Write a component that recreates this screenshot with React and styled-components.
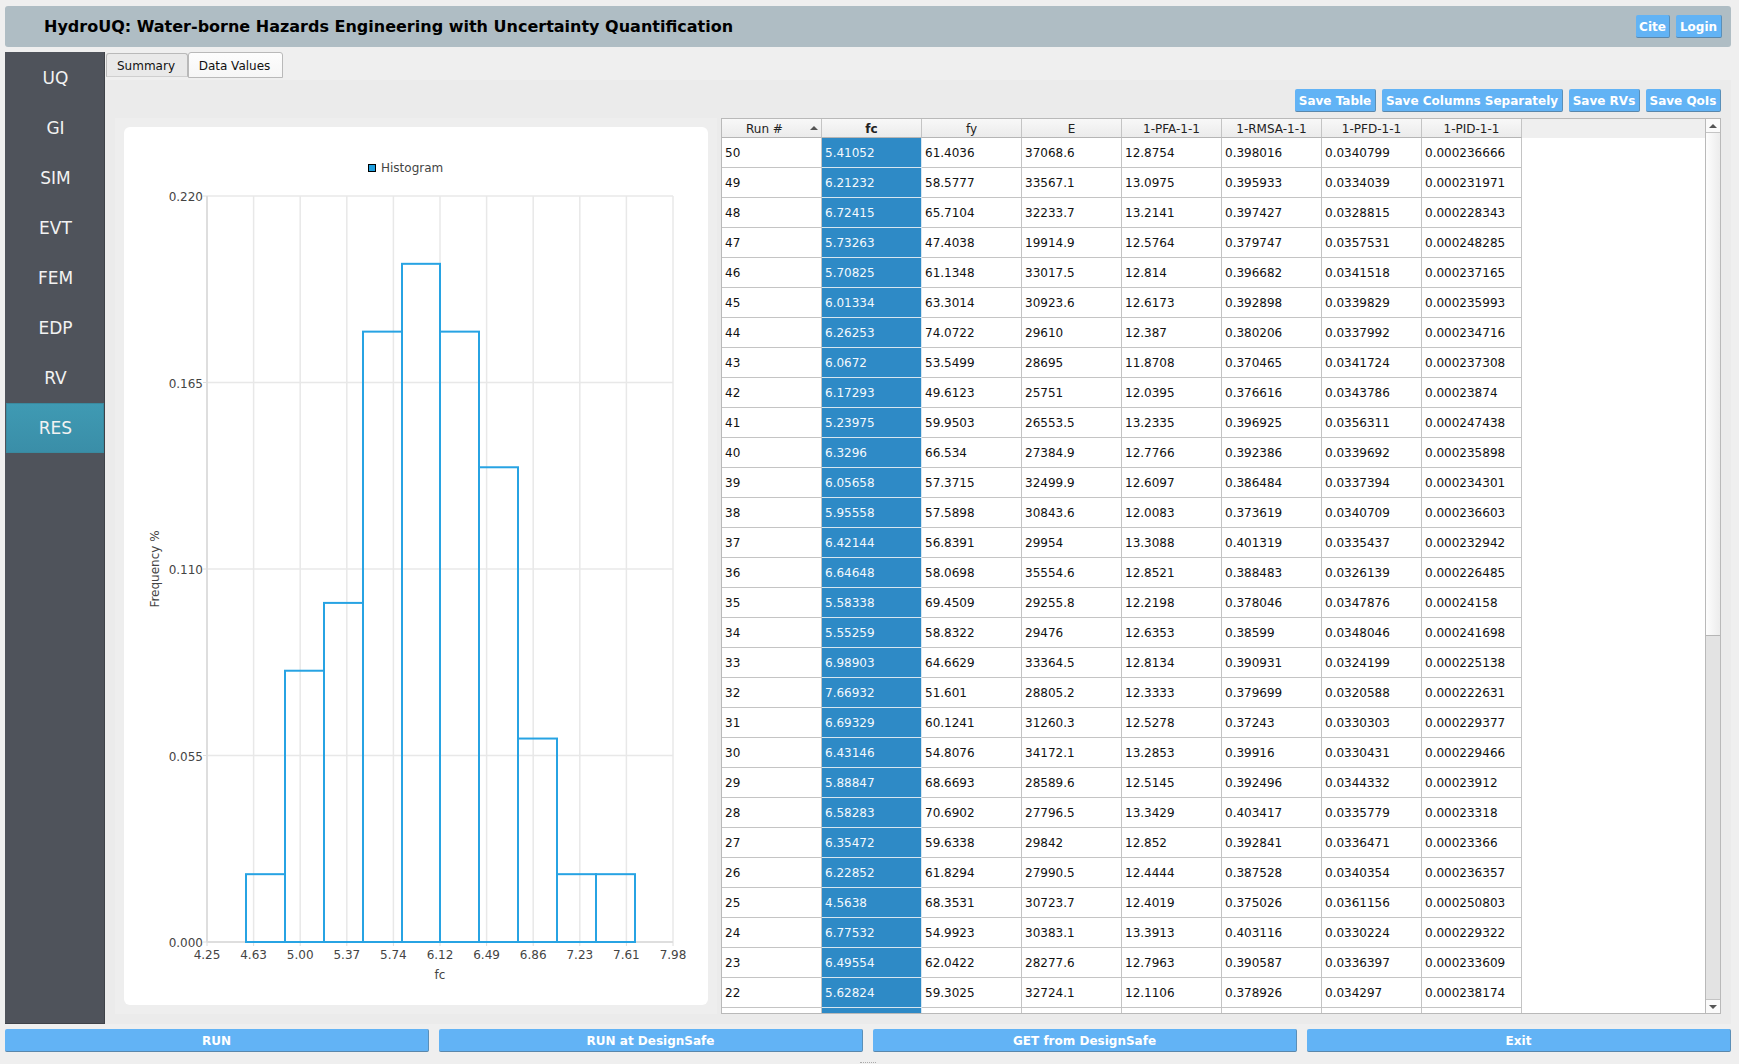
import React from 'react';
import styled, { createGlobalStyle } from 'styled-components';

const Global = createGlobalStyle`
  html, body { margin: 0; padding: 0; background: #efefef; }
  body { font-family: "DejaVu Sans", "Liberation Sans", sans-serif; }
  * { box-sizing: border-box; }
`;

const Page = styled.div`
  width: 1739px;
  height: 1064px;
  padding: 6px 8px 0 5px;
  display: flex;
  flex-direction: column;
  overflow: hidden;
  position: relative;
`;
const Header = styled.header`
  height: 41px;
  flex: none;
  background: #afbdc4;
  border-radius: 3px;
  display: flex;
  align-items: center;
  justify-content: space-between;
  padding: 0 9px 0 39px;
`;
const Title = styled.h1`
  margin: 0;
  font-size: 16px;
  font-weight: 700;
  color: #000;
`;
const ButtonRow = styled.div`
  display: flex;
  gap: ${p => p.$gap || 6}px;
  justify-content: flex-end;
`;
const BlueButton = styled.button`
  height: 23px;
  padding: 2px 0 0;
  width: ${p => (p.$w ? `${p.$w}px` : 'auto')};
  background: #62b3f5;
  border: none;
  border-right: 1px solid #5a8fb8;
  border-bottom: 1px solid #5a87ab;
  border-radius: 2px;
  color: #fff;
  font-family: inherit;
  font-size: 12px;
  font-weight: 700;
  white-space: nowrap;
  text-align: center;
  line-height: 20px;
`;
const Main = styled.div`
  flex: none;
  height: 972px;
  margin-top: 5px;
  display: flex;
`;
const Sidebar = styled.nav`
  width: 100px;
  flex: none;
  background: #4f535b;
  border-right: 1px solid #3f4248;
  border-bottom: 1px solid #3f4248;
  display: flex;
  flex-direction: column;
  padding: 1px 0 0 1px;
`;
const NavItem = styled.div`
  height: 50px;
  padding-left: 1px;
  display: flex;
  align-items: center;
  justify-content: center;
  font-size: 17px;
  color: #f2f2f2;
  background: ${p => (p.$active ? 'linear-gradient(#3f9ab3, #3a8ea8)' : 'transparent')};
  border: ${p => (p.$active ? '1px solid #3a8a9f' : 'none')};
`;
const Content = styled.div`
  flex: 1;
  display: flex;
  flex-direction: column;
  min-width: 0;
`;
const Tabs = styled.div`
  height: 26px;
  flex: none;
  display: flex;
  align-items: flex-end;
  padding-left: 1px;
`;
const Tab = styled.div`
  height: ${p => (p.$active ? 26 : 24)}px;
  width: ${p => p.$w}px;
  margin-bottom: ${p => (p.$active ? 0 : 1)}px;
  padding: ${p => (p.$active ? '1px 2px 0 0' : '2px 2px 0 0')};
  display: flex;
  align-items: center;
  justify-content: center;
  font-size: 12px;
  color: #111;
  background: ${p => (p.$active ? 'linear-gradient(#fdfdfd, #f6f6f6)' : '#e9e9e9')};
  border: 1px solid #b9b9b9;
  border-bottom: ${p => (p.$active ? '1px solid #b9b9b9' : '1px solid #cfcfcf')};
  border-radius: 3px 3px 0 0;
`;
const Panel = styled.section`
  flex: 1;
  margin-top: 2px;
  background: #ebebeb;
  padding: 9px 10px 0 10px;
  display: flex;
  flex-direction: column;
  gap: 6px;
`;
const Split = styled.div`
  height: 896px;
  flex: none;
  display: flex;
  gap: 4px;
`;
const ChartWell = styled.div`
  width: 602px;
  flex: none;
  background: #eeeeee;
  padding: 9px;
`;
const ChartCard = styled.div`
  height: 878px;
  background: #fff;
  border-radius: 6px;
  overflow: hidden;
`;
const ChartSvg = styled.svg`
  display: block;
  font-family: "DejaVu Sans", sans-serif;
`;
const TableFrame = styled.div`
  flex: 1;
  min-width: 0;
  background: #fff;
  border: 1px solid #b9b9b9;
  display: flex;
  overflow: hidden;
`;
const TableArea = styled.div`
  flex: 1;
  min-width: 0;
  overflow: hidden;
`;
const HeadRow = styled.div`
  height: 19px;
  background: #efefef;
  display: flex;
`;
const HeadCell = styled.div`
  width: 100px;
  height: 19px;
  flex: none;
  position: relative;
  padding-right: ${p => (p.$sorted ? 14 : 0)}px;
  font-size: 12px;
  font-weight: ${p => (p.$bold ? 700 : 400)};
  color: #222;
  text-align: center;
  line-height: 20px;
  background: linear-gradient(#f8f8f8, #ebebeb);
  border-right: 1px solid #c4c4c4;
  border-bottom: 1px solid #b5b5b5;
`;
const SortArrow = styled.span`
  position: absolute;
  right: 3px;
  top: 7px;
  width: 0;
  height: 0;
  border-left: 4px solid transparent;
  border-right: 4px solid transparent;
  border-bottom: 4px solid #555;
`;
const Row = styled.div`
  display: flex;
  height: 30px;
`;
const Cell = styled.div`
  width: 100px;
  height: 30px;
  flex: none;
  padding-left: 3px;
  font-size: 12px;
  line-height: 31px;
  color: ${p => (p.$selected ? '#f4f9fd' : '#111')};
  background: ${p => (p.$selected ? '#2e8ac6' : '#fff')};
  border-right: 1px solid ${p => (p.$selected ? '#d8e6f0' : '#c4c4c4')};
  border-bottom: 1px solid ${p => (p.$selected ? '#d8e6f0' : '#c4c4c4')};
`;
const ScrollBar = styled.div`
  width: 15px;
  flex: none;
  border-left: 1px solid #b9b9b9;
  background: #e3e3e3;
  display: flex;
  flex-direction: column;
`;
const ScrollButton = styled.div`
  height: 14px;
  flex: none;
  background: #fafafa;
  border-top: ${p => (p.$down ? '1px solid #c4c4c4' : 'none')};
  border-bottom: ${p => (p.$down ? 'none' : '1px solid #c4c4c4')};
  display: flex;
  align-items: center;
  justify-content: center;
`;
const UpGlyph = styled.span`
  width: 0;
  height: 0;
  border-left: 4px solid transparent;
  border-right: 4px solid transparent;
  border-bottom: 4px solid #555;
`;
const DownGlyph = styled.span`
  width: 0;
  height: 0;
  border-left: 4px solid transparent;
  border-right: 4px solid transparent;
  border-top: 4px solid #555;
`;
const ScrollHandle = styled.div`
  height: 503px;
  flex: none;
  background: linear-gradient(90deg, #fdfdfd, #ececec);
  border-bottom: 1px solid #b5b5b5;
`;
const ScrollSpacer = styled.div`
  flex: 1;
`;
const Footer = styled.footer`
  margin-top: 5px;
  display: grid;
  grid-template-columns: repeat(4, 1fr);
  gap: 10px;
`;
const Grip = styled.div`
  position: absolute;
  left: 860px;
  bottom: 0;
  width: 16px;
  height: 2px;
  border-top: 1px dotted #aaa;
`;

const columns = ['fc', 'fy', 'E', '1-PFA-1-1', '1-RMSA-1-1', '1-PFD-1-1', '1-PID-1-1'];
const rows = [
  ['50','5.41052','61.4036','37068.6','12.8754','0.398016','0.0340799','0.000236666'],
  ['49','6.21232','58.5777','33567.1','13.0975','0.395933','0.0334039','0.000231971'],
  ['48','6.72415','65.7104','32233.7','13.2141','0.397427','0.0328815','0.000228343'],
  ['47','5.73263','47.4038','19914.9','12.5764','0.379747','0.0357531','0.000248285'],
  ['46','5.70825','61.1348','33017.5','12.814','0.396682','0.0341518','0.000237165'],
  ['45','6.01334','63.3014','30923.6','12.6173','0.392898','0.0339829','0.000235993'],
  ['44','6.26253','74.0722','29610','12.387','0.380206','0.0337992','0.000234716'],
  ['43','6.0672','53.5499','28695','11.8708','0.370465','0.0341724','0.000237308'],
  ['42','6.17293','49.6123','25751','12.0395','0.376616','0.0343786','0.00023874'],
  ['41','5.23975','59.9503','26553.5','13.2335','0.396925','0.0356311','0.000247438'],
  ['40','6.3296','66.534','27384.9','12.7766','0.392386','0.0339692','0.000235898'],
  ['39','6.05658','57.3715','32499.9','12.6097','0.386484','0.0337394','0.000234301'],
  ['38','5.95558','57.5898','30843.6','12.0083','0.373619','0.0340709','0.000236603'],
  ['37','6.42144','56.8391','29954','13.3088','0.401319','0.0335437','0.000232942'],
  ['36','6.64648','58.0698','35554.6','12.8521','0.388483','0.0326139','0.000226485'],
  ['35','5.58338','69.4509','29255.8','12.2198','0.378046','0.0347876','0.00024158'],
  ['34','5.55259','58.8322','29476','12.6353','0.38599','0.0348046','0.000241698'],
  ['33','6.98903','64.6629','33364.5','12.8134','0.390931','0.0324199','0.000225138'],
  ['32','7.66932','51.601','28805.2','12.3333','0.379699','0.0320588','0.000222631'],
  ['31','6.69329','60.1241','31260.3','12.5278','0.37243','0.0330303','0.000229377'],
  ['30','6.43146','54.8076','34172.1','13.2853','0.39916','0.0330431','0.000229466'],
  ['29','5.88847','68.6693','28589.6','12.5145','0.392496','0.0344332','0.00023912'],
  ['28','6.58283','70.6902','27796.5','13.3429','0.403417','0.0335779','0.00023318'],
  ['27','6.35472','59.6338','29842','12.852','0.392841','0.0336471','0.00023366'],
  ['26','6.22852','61.8294','27990.5','12.4444','0.387528','0.0340354','0.000236357'],
  ['25','4.5638','68.3531','30723.7','12.4019','0.375026','0.0361156','0.000250803'],
  ['24','6.77532','54.9923','30383.1','13.3913','0.403116','0.0330224','0.000229322'],
  ['23','6.49554','62.0422','28277.6','12.7963','0.390587','0.0336397','0.000233609'],
  ['22','5.62824','59.3025','32724.1','12.1106','0.378926','0.034297','0.000238174'],
  ['','','','','','','',''],
];

const X0 = 207, X1 = 673, Y0 = 942, Y1 = 196;
const xLabels = ['4.25','4.63','5.00','5.37','5.74','6.12','6.49','6.86','7.23','7.61','7.98'];
const yLabels = ['0.000','0.055','0.110','0.165','0.220'];
const barEdges = [246, 285, 324, 363, 402, 440, 479, 518, 557, 596, 635];
const heights = [0.02, 0.08, 0.10, 0.18, 0.20, 0.18, 0.14, 0.06, 0.02, 0.02];
const xAt = i => X0 + (X1 - X0) * i / 10;
const yAt = v => Y0 - (Y0 - Y1) * v / 0.22;

function Histogram() {
  return (
    <ChartSvg width="584" height="878" viewBox="124 127 584 878">
      {xLabels.map((l, i) => i > 0 && (
        <line key={l} x1={xAt(i)} x2={xAt(i)} y1={Y1} y2={Y0} stroke="#e8e8e8" strokeWidth="1.5" />
      ))}
      {yLabels.map((l, i) => i > 0 && (
        <line key={l} x1={X0} x2={X1} y1={Y0 - (Y0 - Y1) * i / 4} y2={Y0 - (Y0 - Y1) * i / 4} stroke="#e8e8e8" strokeWidth="1.5" />
      ))}
      <line x1={X0} x2={X0} y1={Y1} y2={Y0} stroke="#dedede" strokeWidth="2" />
      <line x1={X0} x2={X1} y1={Y0} y2={Y0} stroke="#dedede" strokeWidth="2" />
      {xLabels.map((l, i) => (
        <line key={l} x1={xAt(i)} x2={xAt(i)} y1={Y0} y2={Y0 + 4} stroke="#dedede" strokeWidth="1" />
      ))}
      {yLabels.map((l, i) => (
        <line key={l} x1={X0 - 4} x2={X0} y1={Y0 - (Y0 - Y1) * i / 4} y2={Y0 - (Y0 - Y1) * i / 4} stroke="#dedede" strokeWidth="1" />
      ))}
      {heights.map((h, i) => (
        <rect key={i} x={barEdges[i]} y={yAt(h)} width={barEdges[i + 1] - barEdges[i]} height={Y0 - yAt(h)} fill="none" stroke="#27a3e3" strokeWidth="2" />
      ))}
      <rect x="368.5" y="164.5" width="7" height="7" fill="#209fdf" stroke="#000" strokeWidth="1" />
      <text x="381" y="172" fontSize="12" fill="#444">Histogram</text>
      {yLabels.map((l, i) => (
        <text key={l} x="203" y={Y0 - (Y0 - Y1) * i / 4 + 5} fontSize="12" fill="#444" textAnchor="end">{l}</text>
      ))}
      {xLabels.map((l, i) => (
        <text key={l} x={xAt(i)} y="959" fontSize="12" fill="#444" textAnchor="middle">{l}</text>
      ))}
      <text x="440" y="979" fontSize="12" fill="#444" textAnchor="middle">fc</text>
      <text x="0" y="0" fontSize="12" fill="#444" textAnchor="middle" transform="translate(159 569) rotate(-90)">Frequency %</text>
    </ChartSvg>
  );
}

export default function App() {
  return (
    <Page>
      <Global />
      <Header>
        <Title>HydroUQ: Water-borne Hazards Engineering with Uncertainty Quantification</Title>
        <ButtonRow>
          <BlueButton $w={34}>Cite</BlueButton>
          <BlueButton $w={46}>Login</BlueButton>
        </ButtonRow>
      </Header>
      <Main>
        <Sidebar>
          {['UQ', 'GI', 'SIM', 'EVT', 'FEM', 'EDP', 'RV', 'RES'].map(n => (
            <NavItem key={n} $active={n === 'RES'}>{n}</NavItem>
          ))}
        </Sidebar>
        <Content>
          <Tabs>
            <Tab $w={82}>Summary</Tab>
            <Tab $w={95} $active>Data Values</Tab>
          </Tabs>
          <Panel>
            <ButtonRow>
              <BlueButton $w={81}>Save Table</BlueButton>
              <BlueButton $w={181}>Save Columns Separately</BlueButton>
              <BlueButton $w={71}>Save RVs</BlueButton>
              <BlueButton $w={75}>Save QoIs</BlueButton>
            </ButtonRow>
            <Split>
              <ChartWell>
                <ChartCard>
                  <Histogram />
                </ChartCard>
              </ChartWell>
              <TableFrame>
                <TableArea>
                  <HeadRow>
                    <HeadCell $sorted>Run #<SortArrow /></HeadCell>
                    {columns.map(c => (
                      <HeadCell key={c} $bold={c === 'fc'}>{c}</HeadCell>
                    ))}
                  </HeadRow>
                  {rows.map((r, i) => (
                    <Row key={i}>
                      {r.map((v, j) => (
                        <Cell key={j} $selected={j === 1}>{v}</Cell>
                      ))}
                    </Row>
                  ))}
                </TableArea>
                <ScrollBar>
                  <ScrollButton><UpGlyph /></ScrollButton>
                  <ScrollHandle />
                  <ScrollSpacer />
                  <ScrollButton $down><DownGlyph /></ScrollButton>
                </ScrollBar>
              </TableFrame>
            </Split>
          </Panel>
        </Content>
      </Main>
      <Footer>
        <BlueButton>RUN</BlueButton>
        <BlueButton>RUN at DesignSafe</BlueButton>
        <BlueButton>GET from DesignSafe</BlueButton>
        <BlueButton>Exit</BlueButton>
      </Footer>
      <Grip />
    </Page>
  );
}
